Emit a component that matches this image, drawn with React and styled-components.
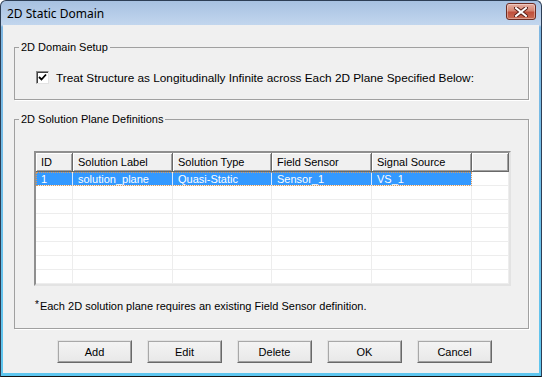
import React from 'react'
import styled, { createGlobalStyle } from 'styled-components'

const GlobalStyle = createGlobalStyle`
  html, body {
    margin: 0;
    padding: 0;
    background: #ffffff;
  }
  body {
    font-family: "Liberation Sans", Tahoma, Arial, sans-serif;
    font-size: 11px;
    color: #000;
  }
`

const Window = styled.div`
  width: 542px;
  height: 377px;
  box-sizing: border-box;
  border: 1px solid #2d3e55;
  border-bottom-color: #111;
  border-radius: 6px 6px 0 0;
  padding: 0 2px 3px 2px;
  background: linear-gradient(to bottom, #a7c1e1 0, #c2d6ee 24px, #7fb7e2 26px, #5ec6ef 100%);
  display: flex;
  flex-direction: column;
  overflow: hidden;
`

const TitleBar = styled.div`
  height: 24px;
  display: flex;
  align-items: center;
  justify-content: space-between;
  padding: 0 3px 0 4px;
  font-family: "Segoe UI", "Noto Sans", "Liberation Sans", sans-serif;
  font-size: 12px;
  color: #000;
`

const CloseButton = styled.div`
  width: 30px;
  height: 17px;
  margin-top: -3px;
  box-sizing: border-box;
  border: 1px solid #6e2c22;
  border-radius: 3px;
  background: linear-gradient(to bottom, #e6b0a4 0%, #d58571 45%, #c0503c 55%, #c96c54 100%);
  box-shadow: inset 0 0 0 1px rgba(255, 255, 255, 0.35);
  display: flex;
  align-items: center;
  justify-content: center;
`

const Client = styled.div`
  flex: 1;
  background: #f0f0f0;
  padding: 15px 10px 0 11px;
  display: flex;
  flex-direction: column;
`

const Group = styled.fieldset`
  margin: 0;
  margin-top: ${p => p.$top || 0}px;
  padding: ${p => p.$pad};
  border: 1px solid #a0a0a0;
  box-shadow: 1px 1px 0 #fff;
  min-width: 0;
`

const Legend = styled.legend`
  padding: 0 2px;
  margin-left: ${p => p.$offset}px;
  line-height: 14px;
`

const CheckRow = styled.label`
  display: flex;
  align-items: center;
  height: 15px;
  gap: 7px;
  font-size: 11.8px;
`

const CheckBox = styled.span`
  width: 13px;
  height: 13px;
  box-sizing: border-box;
  border: 1px solid;
  border-color: #8a8a8a #e3e3e3 #e3e3e3 #8a8a8a;
  background: #fff;
  box-shadow: inset 1px 1px 0 #404040;
  display: flex;
  align-items: center;
  justify-content: center;
`

const Table = styled.div`
  box-sizing: border-box;
  height: 135px;
  border: 2px solid;
  border-color: #8f8f8f #e3e3e3 #e3e3e3 #8f8f8f;
  box-shadow: inset 1px 1px 0 #696969;
  background: #fff;
  overflow: hidden;
`

const Row = styled.div`
  display: grid;
  grid-template-columns: 37px 100px 99px 100px 100px 1fr;
  position: relative;
`

const HeadCell = styled.div`
  height: 19px;
  box-sizing: border-box;
  padding: 3px 0 0 5px;
  background: #f0f0f0;
  border-right: 1px solid #696969;
  border-bottom: 1px solid #696969;
  box-shadow: inset 1px 1px 0 #fff, inset -1px -1px 0 #a0a0a0;
  white-space: nowrap;
  overflow: hidden;
`

const Cell = styled.div`
  height: 14px;
  box-sizing: border-box;
  padding: 1px 0 0 5px;
  line-height: 12px;
  border-right: 1px solid ${p => (p.$selected ? '#d6e9ff' : '#ededed')};
  border-bottom: 1px solid #ededed;
  background: ${p => (p.$selected ? '#3399ff' : '#fff')};
  color: ${p => (p.$selected ? '#fff' : '#000')};
  white-space: nowrap;
  overflow: hidden;
`

const FocusRect = styled.div`
  position: absolute;
  left: 0;
  top: 0;
  width: 436px;
  height: 14px;
  box-sizing: border-box;
  border: 1px dotted #d99a5e;
  pointer-events: none;
`

const Note = styled.div`
  margin-top: 13px;
  line-height: 14px;
  margin-left: 1px;
`

const Star = styled.span`
  font-size: 10px;
  color: #000;
  position: relative;
  top: -2px;
  margin-right: 1px;
`

const ButtonRow = styled.div`
  display: flex;
  gap: 15px;
  padding-left: 43px;
  margin-top: 11px;
`

const Button = styled.button`
  width: 75px;
  height: 23px;
  box-sizing: border-box;
  font-family: inherit;
  font-size: 11px;
  color: #000;
  border: 1px solid;
  border-color: #e3e3e3 #696969 #696969 #e3e3e3;
  box-shadow: inset 1px 1px 0 #a8a8a8, inset -1px -1px 0 #a0a0a0;
  background: linear-gradient(to bottom, #f4f4f4, #e8e8e8);
  padding: 0;
`

const columns = ['ID', 'Solution Label', 'Solution Type', 'Field Sensor', 'Signal Source', '']
const data = [['1', 'solution_plane', 'Quasi-Static', 'Sensor_1', 'VS_1']]
const emptyRows = 7

const CloseIcon = () => (
  <svg width="14" height="10" viewBox="0 0 14 10">
    <path d="M2 1 L12 9 M12 1 L2 9" stroke="#5a2019" strokeWidth="4" strokeLinecap="square" />
    <path d="M2 1 L12 9 M12 1 L2 9" stroke="#fff" strokeWidth="2" strokeLinecap="square" />
  </svg>
)

const Check = () => (
  <svg width="9" height="9" viewBox="0 0 9 9">
    <path d="M1 4 L3.5 6.5 L8 1.5" stroke="#000" strokeWidth="1.8" fill="none" />
  </svg>
)

const App = () => {
  return (
    <>
      <GlobalStyle />
      <Window>
        <TitleBar>
          <span>2D Static Domain</span>
          <CloseButton>
            <CloseIcon />
          </CloseButton>
        </TitleBar>
        <Client>
          <Group $pad="16px 10px 14px 21px">
            <Legend $offset={-17}>2D Domain Setup</Legend>
            <CheckRow>
              <CheckBox>
                <Check />
              </CheckBox>
              Treat Structure as Longitudinally Infinite across Each 2D Plane Specified Below:
            </CheckRow>
          </Group>

          <Group $top={12} $pad="25px 17px 14px 19px">
            <Legend $offset={-15}>2D Solution Plane Definitions</Legend>
            <Table>
              <Row>
                {columns.map((c, i) => (
                  <HeadCell key={i}>{c}</HeadCell>
                ))}
              </Row>
              {data.map((r, i) => (
                <Row key={i}>
                  {r.map((v, j) => (
                    <Cell key={j} $selected>
                      {v}
                    </Cell>
                  ))}
                  <Cell />
                  <FocusRect />
                </Row>
              ))}
              {Array.from({ length: emptyRows }).map((_, i) => (
                <Row key={'e' + i}>
                  {columns.map((c, j) => (
                    <Cell key={j} />
                  ))}
                </Row>
              ))}
            </Table>
            <Note>
              <Star>*</Star>Each 2D solution plane requires an existing Field Sensor definition.
            </Note>
          </Group>

          <ButtonRow>
            <Button>Add</Button>
            <Button>Edit</Button>
            <Button>Delete</Button>
            <Button>OK</Button>
            <Button>Cancel</Button>
          </ButtonRow>
        </Client>
      </Window>
    </>
  )
}

export default App
